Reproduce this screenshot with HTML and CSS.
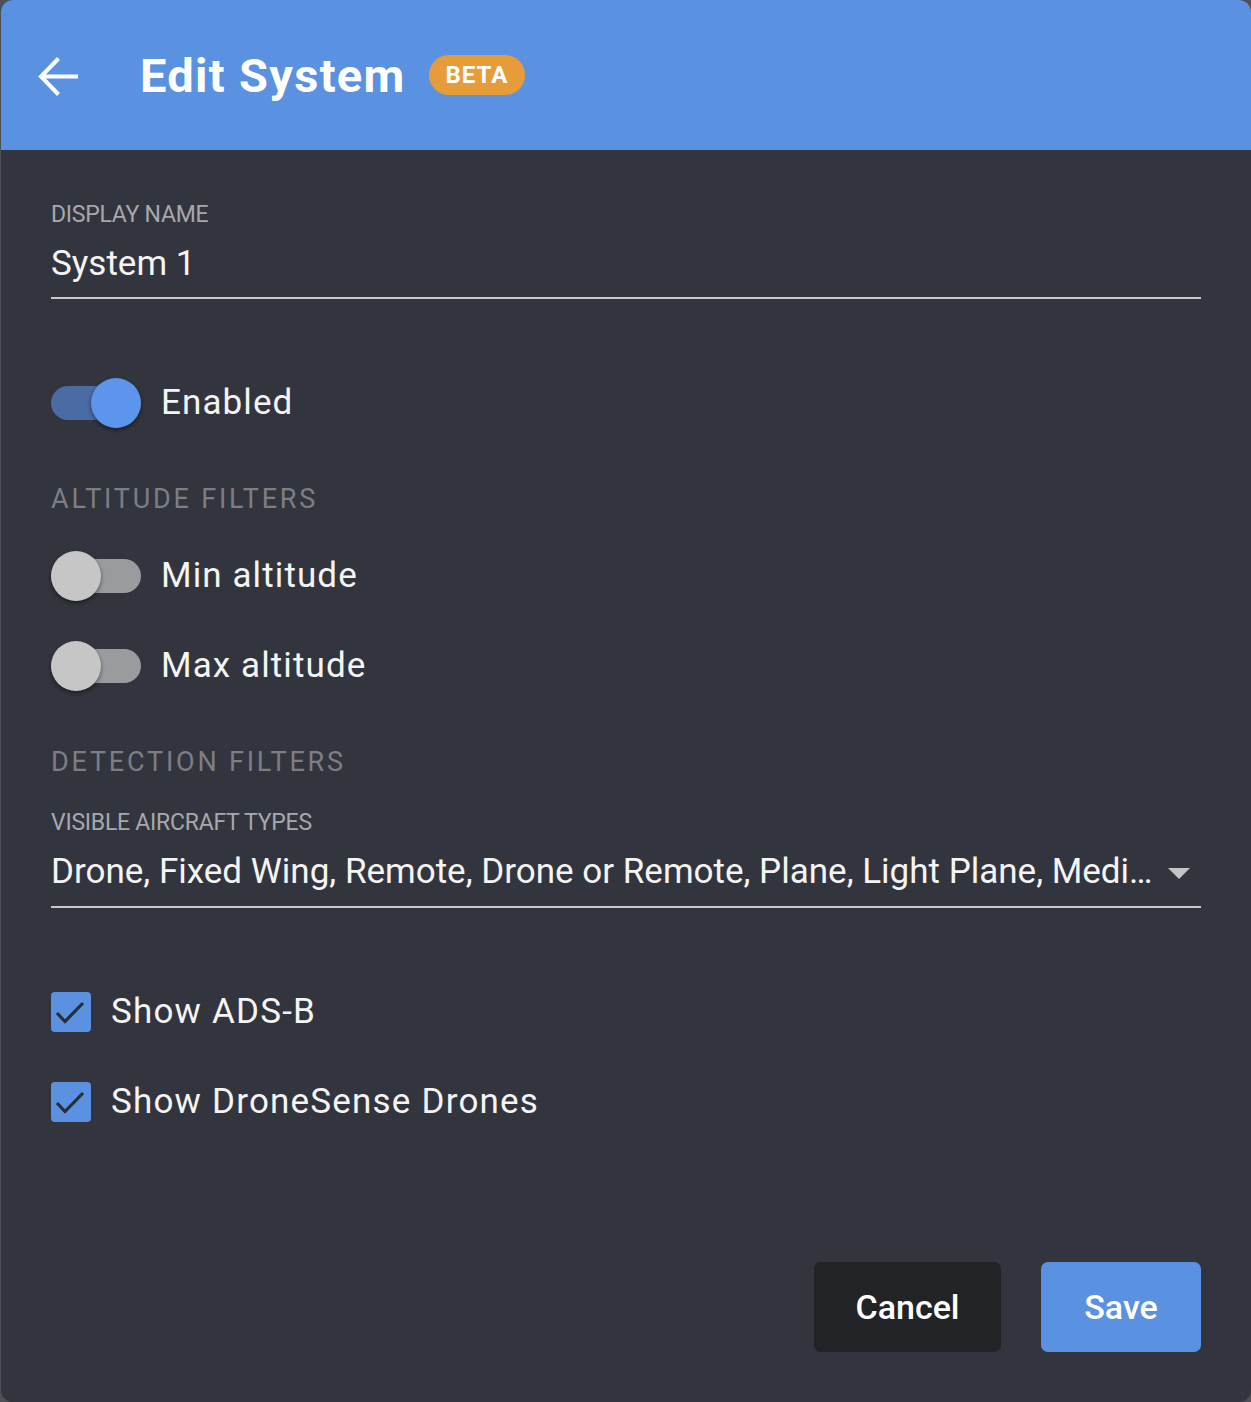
FILE: index.html
```html
<!DOCTYPE html>
<html lang="en">
<head>
<meta charset="utf-8">
<title>Edit System</title>
<link rel="stylesheet" href="styles.css">
</head>
<body>
<div class="dialog">
  <header class="header">
    <svg class="back" width="42" height="42" viewBox="0 0 42 42" aria-hidden="true">
      <path d="M3 20.5H40M20.5 2.5L3 20.5L20.5 38.5" fill="none" stroke="#fff" stroke-width="4" stroke-linecap="butt" stroke-linejoin="miter"/>
    </svg>
    <h1 class="title">Edit System</h1>
    <span class="badge">BETA</span>
  </header>
  <main class="content">
    <div class="field">
      <div class="field-label">DISPLAY NAME</div>
      <div class="field-input">System 1</div>
    </div>

    <div class="toggle-row toggle-row--first">
      <span class="toggle toggle--on"><span class="track"></span><span class="thumb"></span></span>
      <span class="row-text">Enabled</span>
    </div>

    <div class="section-title">ALTITUDE FILTERS</div>
    <div class="toggle-row toggle-row--tight">
      <span class="toggle"><span class="track"></span><span class="thumb"></span></span>
      <span class="row-text">Min altitude</span>
    </div>
    <div class="toggle-row toggle-row--next">
      <span class="toggle"><span class="track"></span><span class="thumb"></span></span>
      <span class="row-text">Max altitude</span>
    </div>

    <div class="section-title">DETECTION FILTERS</div>
    <div class="field field--select">
      <div class="field-label">VISIBLE AIRCRAFT TYPES</div>
      <div class="field-input select">
        <span class="select-value">Drone, Fixed Wing, Remote, Drone or Remote, Plane, Light Plane, Medium Plane, Heavy Plane, Helicopter</span>
        <span class="caret"></span>
      </div>
    </div>

    <div class="check-row check-row--first">
      <span class="checkbox">
        <svg width="40" height="40" viewBox="0 0 40 40" aria-hidden="true"><path d="M6 21L14 29.5L32 11" fill="none" stroke="#2b2d34" stroke-width="3.2"/></svg>
      </span>
      <span class="row-text">Show ADS-B</span>
    </div>
    <div class="check-row check-row--next">
      <span class="checkbox">
        <svg width="40" height="40" viewBox="0 0 40 40" aria-hidden="true"><path d="M6 21L14 29.5L32 11" fill="none" stroke="#2b2d34" stroke-width="3.2"/></svg>
      </span>
      <span class="row-text">Show DroneSense Drones</span>
    </div>

    <div class="actions">
      <button class="btn btn--cancel">Cancel</button>
      <button class="btn btn--save">Save</button>
    </div>
  </main>
</div>
</body>
</html>
```
FILE: styles.css
```css
html, body {
  margin: 0;
  padding: 0;
  background: #4d5056;
}
body {
  font-family: Roboto, "Liberation Sans", Arial, sans-serif;
  color: #f2f2f2;
}
.dialog {
  margin-left: 1px;
  width: 1250px;
  height: 1402px;
  background: #33353e;
  border-radius: 12px;
  overflow: hidden;
  display: flex;
  flex-direction: column;
}
.header {
  height: 150px;
  flex: 0 0 150px;
  background: #5a92e1;
  display: flex;
  align-items: center;
  padding-left: 37px;
  box-sizing: border-box;
}
.back {
  display: block;
  margin-top: 4px;
}
.title {
  margin: 0 0 0 60px;
  font-size: 47px;
  font-weight: 700;
  letter-spacing: 1.3px;
  color: #ffffff;
  line-height: 1;
}
.badge {
  margin-left: 23px;
  height: 40px;
  padding: 0 17px;
  border-radius: 20px;
  background: #e79c3a;
  color: #fff;
  font-size: 24px;
  font-weight: 700;
  letter-spacing: 1px;
  display: inline-flex;
  align-items: center;
  box-sizing: border-box;
}
.content {
  flex: 1;
  display: flex;
  flex-direction: column;
  padding: 52px 50px 50px 50px;
}
.field-label {
  font-size: 23px;
  line-height: 26px;
  color: #a6a8ad;
  letter-spacing: -0.25px;
}
.field-input {
  margin-top: 14px;
  font-size: 35px;
  line-height: 44px;
  color: #f4f4f4;
  padding-bottom: 11px;
  border-bottom: 2.5px solid #c9c9cc;
}
.field--select {
  margin-top: 33px;
}
.select {
  display: flex;
  align-items: center;
  padding-bottom: 12px;
}
.select-value {
  flex: 1;
  min-width: 0;
  white-space: nowrap;
  overflow: hidden;
  text-overflow: ellipsis;
  padding-right: 8px;
}
.caret {
  width: 0;
  height: 0;
  border-left: 11px solid transparent;
  border-right: 11px solid transparent;
  border-top: 11px solid #c4c4c6;
  margin-right: 11px;
  margin-top: 2px;
}
.toggle-row, .check-row {
  display: flex;
  align-items: center;
}
.toggle-row--first { margin-top: 79px; }
.toggle-row--tight { margin-top: 37px; }
.toggle-row--next { margin-top: 40px; }
.toggle {
  position: relative;
  width: 90px;
  height: 50px;
  flex: 0 0 90px;
}
.track {
  position: absolute;
  left: 0;
  top: 8px;
  width: 90px;
  height: 34px;
  border-radius: 17px;
  background: #9a9b9f;
}
.thumb {
  position: absolute;
  top: 0;
  left: 0;
  width: 50px;
  height: 50px;
  border-radius: 50%;
  background: #c6c6c7;
  box-shadow: 0 2px 4px rgba(0, 0, 0, 0.45);
}
.toggle--on .track { background: #4a6ba4; }
.toggle--on .thumb { left: 40px; background: #5c95eb; }
.row-text {
  margin-left: 20px;
  font-size: 35px;
  letter-spacing: 1.1px;
  color: #f4f4f4;
  line-height: 44px;
}
.section-title {
  margin-top: 56px;
  font-size: 27px;
  line-height: 30px;
  letter-spacing: 2.8px;
  color: #7c7e84;
}
.check-row--first { margin-top: 82px; }
.check-row--next { margin-top: 46px; }
.checkbox {
  width: 40px;
  height: 40px;
  flex: 0 0 40px;
  border-radius: 4px;
  background: #5a92e1;
  display: block;
}
.checkbox svg { display: block; }
.check-row .row-text { margin-left: 20px; letter-spacing: 1.2px; }
.actions {
  margin-top: auto;
  display: flex;
  justify-content: flex-end;
  gap: 40px;
}
.btn {
  height: 90px;
  border: none;
  border-radius: 7px;
  font-family: Roboto, "Liberation Sans", Arial, sans-serif;
  font-size: 34px;
  font-weight: 500;
  color: #fff;
  padding: 0;
}
.btn--cancel { width: 187px; background: #222327; }
.btn--save { width: 160px; background: #5a92e1; }
```
